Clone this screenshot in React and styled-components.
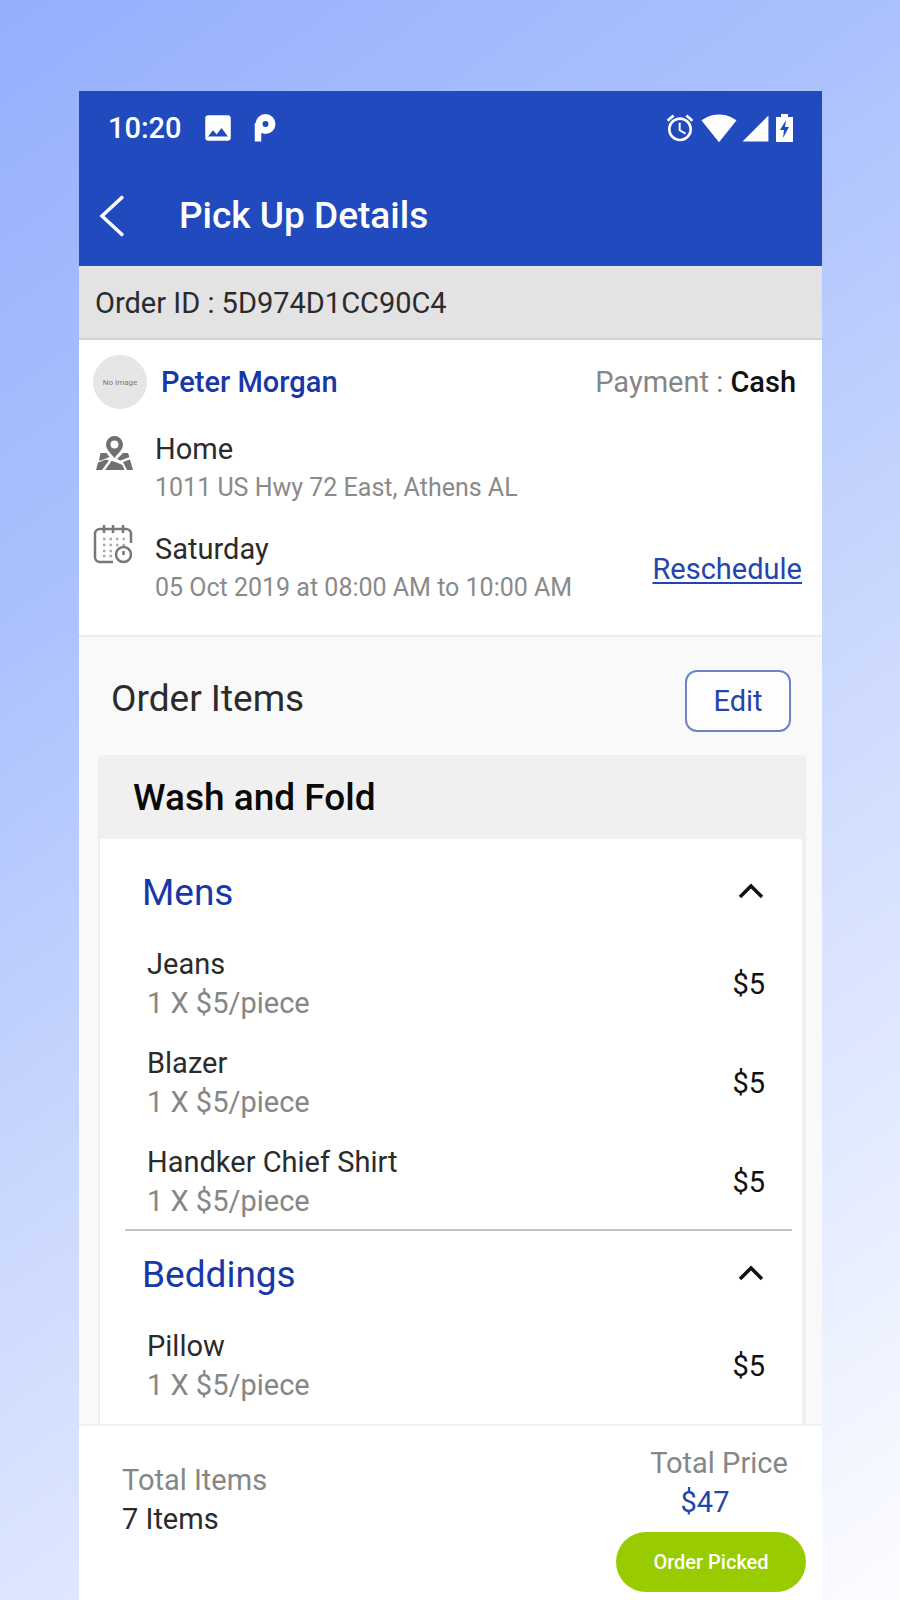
import React, { useState } from 'react';
import styled, { createGlobalStyle } from 'styled-components';
import { MdAlarm, MdImage, MdSignalCellular4Bar, MdSignalWifi4Bar } from 'react-icons/md';

const GlobalStyle = createGlobalStyle`
  * {
    box-sizing: border-box;
  }

  body {
    margin: 0;
    font-family: Roboto, "Liberation Sans", sans-serif;
    font-size: 29px;
    line-height: 39px;
    color: #2b2b2b;
  }

  h1, h2, h3, h4, p, ul {
    margin: 0;
    padding: 0;
    font-weight: 400;
  }

  button {
    font-family: inherit;
    cursor: pointer;
  }
`;

const Page = styled.div`
  display: flex;
  min-height: 100vh;
  padding: 91px 78px 0 79px;
  background: linear-gradient(145deg, #95affd 0%, #abc1fd 28%, #cddafe 57%, #dfe8ff 75%, #fdfdff 100%);
`;

const Phone = styled.main`
  flex: 1;
  display: flex;
  flex-direction: column;
  background: #f9f9f9;
`;

const Header = styled.header`
  background: #204abe;
  color: #fff;
`;

const StatusBar = styled.div`
  display: flex;
  align-items: center;
  justify-content: space-between;
  height: 74px;
  padding: 0 29px;
  font-weight: 500;
`;

const StatusGroup = styled.div`
  display: flex;
  align-items: center;
  gap: ${({ $gap }) => $gap}px;
`;

const TitleBar = styled.div`
  display: flex;
  align-items: center;
  height: 101px;
  padding: 0 20px;
  gap: 54px;
`;

const IconButton = styled.button`
  display: flex;
  padding: 0;
  border: 0;
  background: none;
  color: inherit;
`;

const Title = styled.h1`
  font-size: 37px;
  font-weight: 500;
  line-height: 44px;
`;

const OrderId = styled.div`
  display: flex;
  align-items: center;
  height: 74px;
  padding: 2px 16px 0;
  background: #e3e3e3;
  border-bottom: 2px solid #d2d2d2;
`;

const Customer = styled.section`
  padding: 14px 20px 29px 14px;
  background: #fff;
  border-bottom: 2px solid #ececec;
`;

const CustomerRow = styled.div`
  display: flex;
  align-items: center;
  gap: 14px;
  height: 56px;
  margin-bottom: 15px;
`;

const Avatar = styled.div`
  display: flex;
  align-items: center;
  justify-content: center;
  width: 54px;
  height: 54px;
  border-radius: 50%;
  background: #e6e6e6;
  font-size: 8px;
  color: #777;
`;

const Name = styled.h2`
  flex: 1;
  font-size: 29px;
  font-weight: 500;
  color: #1838a8;
`;

const Payment = styled.p`
  padding-right: 6px;
  color: #868686;

  strong {
    font-weight: 500;
    color: #111;
  }
`;

const InfoRow = styled.div`
  display: flex;
  align-items: flex-start;
  gap: 22px;

  & + & {
    margin-top: 19px;
  }
`;

const InfoText = styled.div`
  flex: 1;
  padding-top: 5px;
`;

const InfoDetail = styled.p`
  font-size: 25px;
  line-height: 37px;
  color: #8a8a8a;
`;

const Reschedule = styled.a`
  align-self: center;
  padding-top: 8px;
  color: #2446ac;
  text-decoration: underline;
  text-decoration-thickness: 2px;
  text-underline-offset: 3px;
`;

const ItemsSection = styled.section`
  flex: 1;
  display: flex;
  flex-direction: column;
`;

const ItemsHeader = styled.div`
  display: flex;
  align-items: center;
  justify-content: space-between;
  padding: 33px 31px 23px 32px;
`;

const SectionTitle = styled.h2`
  padding-bottom: 4px;
  font-size: 37px;
  line-height: 44px;
`;

const EditButton = styled.button`
  width: 106px;
  height: 62px;
  border: 2px solid #6d83c6;
  border-radius: 12px;
  background: #fdfdfe;
  color: #2446ac;
  font-size: 29px;
`;

const Card = styled.div`
  flex: 1;
  margin: 0 16px 0 19px;
  border: solid #efefef;
  border-width: 0 4px 0 2px;
  border-radius: 4px 4px 0 0;
  background: #fff;
`;

const CardTitle = styled.h3`
  padding: 21px 33px 19px;
  background: #f0f0f0;
  color: #0a0a0a;
  font-size: 37px;
  font-weight: 500;
  line-height: 44px;
`;

const CardBody = styled.div`
  padding: 10px 10px 9px 25px;
`;

const Group = styled.section`
  padding-bottom: 8px;

  & + & {
    border-top: 2px solid #c4c4c4;
  }
`;

const GroupHeader = styled.div`
  display: flex;
  align-items: center;
  justify-content: space-between;
  padding: 22px 28px 22px 17px;
`;

const GroupTitle = styled.h4`
  color: #1838a8;
  font-size: 37px;
  line-height: 44px;
`;

const ItemList = styled.ul`
  display: flex;
  flex-direction: column;
  gap: 21px;
  padding: 8px 27px 0 22px;
  list-style: none;
`;

const Item = styled.li`
  display: flex;
  align-items: center;
  justify-content: space-between;
`;

const Muted = styled.p`
  color: #868686;
`;

const Price = styled.span`
  color: #111;
`;

const Footer = styled.footer`
  display: flex;
  align-items: flex-start;
  justify-content: space-between;
  padding: 18px 16px 8px 43px;
  background: #fff;
  border-top: 2px solid #f0f0f0;
`;

const Totals = styled.div`
  padding-top: 17px;
`;

const Checkout = styled.div`
  display: flex;
  flex-direction: column;
  align-items: center;
`;

const TotalLabel = styled(Muted)`
  padding-left: 16px;
`;

const TotalPrice = styled.p`
  padding-right: 12px;
  color: #2446ac;
`;

const PickedButton = styled.button`
  width: 190px;
  height: 60px;
  margin-top: 10px;
  border: 0;
  border-radius: 30px;
  background: #99cc00;
  color: #fff;
  font-size: 20px;
  font-weight: 500;
`;

const groups = [
  {
    title: 'Mens',
    items: [
      { name: 'Jeans', qty: 1, price: 5 },
      { name: 'Blazer', qty: 1, price: 5 },
      { name: 'Handker Chief Shirt', qty: 1, price: 5 },
    ],
  },
  {
    title: 'Beddings',
    items: [{ name: 'Pillow', qty: 1, price: 5 }],
  },
];

const ParkingIcon = () => (
  <svg width="22" height="28" viewBox="0 0 22 28" fill="none" stroke="#fff" aria-hidden="true">
    <circle cx="11.5" cy="10" r="6.5" strokeWidth="7" />
    <path d="M4 9V27.5" strokeWidth="6.5" />
  </svg>
);

const BatteryIcon = () => (
  <svg width="17" height="28" viewBox="0 0 17 28" aria-hidden="true">
    <path d="M5 0h7v3h5v25H0V3h5z" fill="#fff" />
    <path d="M10 6l-6 10h4l-1 8 6-11H9z" fill="#204abe" />
  </svg>
);

const BackIcon = () => (
  <svg width="26" height="42" viewBox="0 0 26 42" fill="none" stroke="#fff" strokeWidth="3.5" aria-hidden="true">
    <path d="M24 1.5L3 21l21 19.5" />
  </svg>
);

const MapIcon = () => (
  <svg width="40" height="46" viewBox="0 0 40 46" fill="#707070" aria-hidden="true">
    <path
      fillRule="evenodd"
      d="M21.5 11a8.5 8.5 0 0 0-8.500 8.500c0 5 5 9 8.500 13.500c3.500-4.500 8.500-8.500 8.500-13.500a8.500 8.500 0 0 0-8.500-8.500zm0 4.500a4 4 0 1 1 0 8a4 4 0 0 1 0-8z"
    />
    <path d="M7.500 28h6l3 4-8.500 3.500-2 0zM5 37.500l8-3 3 1-7 9.500H3zM18.500 36l4 1 7 3 2 5H12zM27 31l3-3h5l1.500 4-9 3.500-3.500-1.500zM30 37l7-2.500L40 45h-6z" />
  </svg>
);

const CalendarIcon = () => (
  <svg width="40" height="46" viewBox="0 0 40 46" fill="none" stroke="#777" strokeWidth="2.5" aria-hidden="true">
    <path d="M20 37H7a5 5 0 0 1-5-5V9a5 5 0 0 1 5-5h26a5 5 0 0 1 5 5v9" />
    <path d="M11 0v8M20 0v8M30 0v8" />
    <path d="M10 14h22M10 20h22M10 26h12M10 31h9" stroke="#aaa" strokeDasharray="2.5 4" />
    <circle cx="30.5" cy="29.5" r="7.500" />
    <path d="M30.500 26v4" />
  </svg>
);

const Chevron = ({ open }) => (
  <svg width="26" height="20" viewBox="0 0 26 20" fill="none" stroke="#111" strokeWidth="3.5" aria-hidden="true">
    <path d={open ? 'M2 14L13 3l11 11' : 'M2 3L13 14L24 3'} />
  </svg>
);

const ItemGroup = ({ title, items }) => {
  const [open, setOpen] = useState(true);

  return (
    <Group>
      <GroupHeader>
        <GroupTitle>{title}</GroupTitle>
        <IconButton type="button" aria-label={`Toggle ${title}`} aria-expanded={open} onClick={() => setOpen(!open)}>
          <Chevron open={open} />
        </IconButton>
      </GroupHeader>
      {open && (
        <ItemList>
          {items.map((item) => (
            <Item key={item.name}>
              <div>
                <p>{item.name}</p>
                <Muted>{`${item.qty} X $${item.price}/piece`}</Muted>
              </div>
              <Price>{`$${item.qty * item.price}`}</Price>
            </Item>
          ))}
        </ItemList>
      )}
    </Group>
  );
};

const App = () => {
  return (
    <Page>
      <GlobalStyle />
      <Phone>
        <Header>
          <StatusBar>
            <StatusGroup $gap={19}>
              <span>10:20</span>
              <MdImage size={34} />
              <ParkingIcon />
            </StatusGroup>
            <StatusGroup $gap={5}>
              <MdAlarm size={32} />
              <StatusGroup $gap={3}>
                <MdSignalWifi4Bar size={36} />
                <MdSignalCellular4Bar size={31} />
              </StatusGroup>
              <BatteryIcon />
            </StatusGroup>
          </StatusBar>
          <TitleBar>
            <IconButton type="button" aria-label="Back">
              <BackIcon />
            </IconButton>
            <Title>Pick Up Details</Title>
          </TitleBar>
        </Header>

        <OrderId>Order ID : 5D974D1CC90C4</OrderId>

        <Customer>
          <CustomerRow>
            <Avatar>No Image</Avatar>
            <Name>Peter Morgan</Name>
            <Payment>
              Payment : <strong>Cash</strong>
            </Payment>
          </CustomerRow>
          <InfoRow>
            <MapIcon />
            <InfoText>
              <p>Home</p>
              <InfoDetail>1011 US Hwy 72 East, Athens AL</InfoDetail>
            </InfoText>
          </InfoRow>
          <InfoRow>
            <CalendarIcon />
            <InfoText>
              <p>Saturday</p>
              <InfoDetail>05 Oct 2019 at 08:00 AM to 10:00 AM</InfoDetail>
            </InfoText>
            <Reschedule href="#reschedule">Reschedule</Reschedule>
          </InfoRow>
        </Customer>

        <ItemsSection>
          <ItemsHeader>
            <SectionTitle>Order Items</SectionTitle>
            <EditButton type="button">Edit</EditButton>
          </ItemsHeader>
          <Card>
            <CardTitle>Wash and Fold</CardTitle>
            <CardBody>
              {groups.map((group) => (
                <ItemGroup key={group.title} title={group.title} items={group.items} />
              ))}
            </CardBody>
          </Card>
        </ItemsSection>

        <Footer>
          <Totals>
            <Muted>Total Items</Muted>
            <p>7 Items</p>
          </Totals>
          <Checkout>
            <TotalLabel>Total Price</TotalLabel>
            <TotalPrice>$47</TotalPrice>
            <PickedButton type="button">Order Picked</PickedButton>
          </Checkout>
        </Footer>
      </Phone>
    </Page>
  );
};

export default App;
